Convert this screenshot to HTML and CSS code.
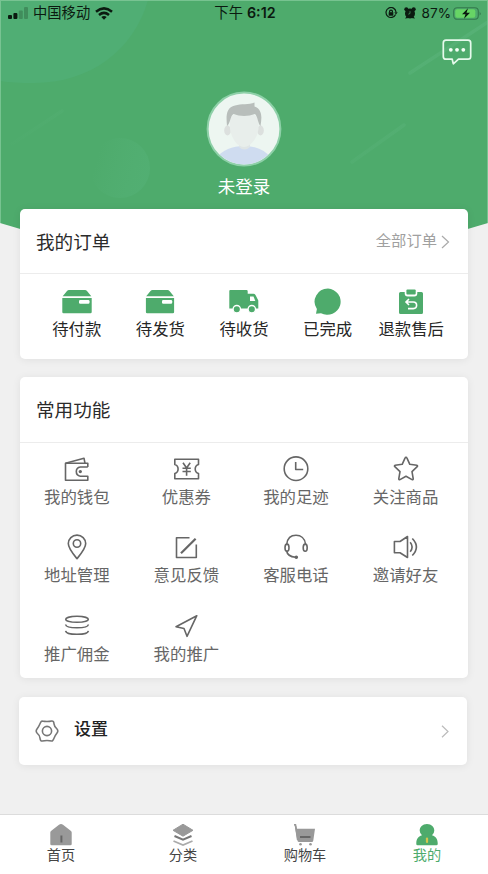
FILE: index.html
```html
<!DOCTYPE html>
<html lang="zh-CN">
<head>
<meta charset="utf-8">
<meta name="viewport" content="width=device-width, initial-scale=1">
<title>我的</title>
<link rel="stylesheet" href="styles.css">
</head>
<body>
<div class="app">
  <svg class="backdrop" width="488" height="262" viewBox="0 0 488 262" aria-hidden="true">
    <defs>
      <linearGradient id="disc" x1="0" y1="0" x2="1" y2="0.3"><stop offset="0.2" stop-color="#59b57d" stop-opacity="0"/><stop offset="1" stop-color="#55b278" stop-opacity=".5"/></linearGradient>
      <linearGradient id="ray" x1="0" y1="1" x2="1" y2="0"><stop offset="0" stop-color="#62b883" stop-opacity="0"/><stop offset="1" stop-color="#5cb57d" stop-opacity=".55"/></linearGradient>
    </defs>
    <path fill="#4eab6c" d="M0 0H488V223Q366 262 244 262T0 223Z"/>
    <path fill="#50ae74" d="M0 0H148C134 50 90 83 34 83Q14 83 0 81Z"/>
    <circle cx="120" cy="168" r="30" fill="url(#disc)"/>
    <path d="M12 144 62 111M352 162 404 125M410 73 488 22" stroke="url(#ray)" stroke-width="3.5" stroke-linecap="round"/>
    <path d="M0 .5H488M.5 0V223M487.500 0V223" stroke="#82c99a" stroke-width="1" opacity=".8"/>
  </svg>

  <header class="status">
    <div class="status-left">
      <svg width="20" height="12" viewBox="0 0 20 12"><g fill="#0b1a10"><rect y="8" width="4" height="4" rx="1"/><rect x="5.4" y="6" width="4" height="6" rx="1"/></g><g fill="#3a8052" opacity=".7"><rect x="10.800" y="3.500" width="4" height="8.500" rx="1"/><rect x="16" y="0" width="4" height="12" rx="1"/></g></svg>
      <span class="carrier">中国移动</span>
      <svg width="18" height="13" viewBox="0 0 18 13" fill="none" stroke="#0b1a10" stroke-width="2.500"><path d="M1 4.700Q9-2 17 4.700M4 8Q9 3.800 14 8"/><path d="m9 12.800-2.700-2.900q2.700-2 5.400 0z" fill="#0b1a10" stroke="none"/></svg>
    </div>
    <div class="clock">下午 <b>6:12</b></div>
    <div class="status-right">
      <svg width="13" height="12" viewBox="0 0 13 12" fill="none" stroke="#0b1a10" stroke-width="1.200"><path d="M10.600 7.500A5 5 0 1 1 11 5"/><path d="m9.300 5.300 3.400 0L11 7.600z" fill="#0b1a10" stroke="none"/><rect x="3.700" y="5.200" width="4.600" height="3.500" fill="#0b1a10" stroke="none"/><path d="M4.600 5.500V4.300q0-1.200 1.400-1.200t1.400 1.200v1.200"/></svg>
      <svg width="12" height="12" viewBox="0 0 12 12"><g fill="#0b1a10"><circle cx="6" cy="6.500" r="5"/><circle cx="2.300" cy="2.200" r="2"/><circle cx="9.700" cy="2.200" r="2"/><path d="m1 11.600 2-2.600 2 2zM11 11.600 9 9l-2 2z"/></g><path d="M6 4.200V6.500L4.300 7.200" fill="none" stroke="#4eab6c" stroke-width=".7"/></svg>
      <span class="percent">87%</span>
      <svg width="29" height="13" viewBox="0 0 29 13"><rect x=".7" y=".7" width="24.600" height="11.600" rx="3.500" fill="none" stroke="#34784c" stroke-width="1.100"/><rect x="2.300" y="2.300" width="20" height="8.400" rx="2" fill="#67d565"/><path d="M26.700 4.500q1.800 2 0 4z" fill="#2f7047"/><path d="m15 1.300-6 5.900h3.500L11 11.800l6-6h-3.500z" fill="#0b1a10"/></svg>
    </div>
  </header>

  <section class="profile">
    <svg class="message" width="30" height="27" viewBox="0 0 30 27" fill="none" stroke="#e6faec" stroke-width="1.700" stroke-linejoin="round"><path d="M4 1.200H26q2.700 0 2.700 2.700V17.500q0 2.700-2.700 2.700H16.500L11.300 24.800 10.200 20.200H4q-2.700 0-2.700-2.700V3.900Q1.300 1.200 4 1.200Z"/><g fill="#f2fff5" stroke="none"><circle cx="8.800" cy="10.800" r="1.900"/><circle cx="15" cy="10.800" r="1.900"/><circle cx="21.300" cy="10.800" r="1.900"/></g></svg>
    <svg class="avatar" width="76" height="76" viewBox="0 0 76 76">
      <defs><clipPath id="face"><circle cx="38" cy="38" r="35.500"/></clipPath></defs>
      <circle cx="38" cy="38" r="36.400" fill="#edf6f1" stroke="#8ed0a8" stroke-width="2"/>
      <g clip-path="url(#face)">
        <path d="M10 76V67Q20 55 38 55T65 67V76Z" fill="#cfdcf0"/>
        <path d="M33 50H44V56Q38.500 61 33 56Z" fill="#dfe5e5"/>
        <ellipse cx="21.500" cy="39.500" rx="3.300" ry="5" fill="#dce0de"/><ellipse cx="54.500" cy="39.500" rx="3.300" ry="5" fill="#dce0de"/>
        <path d="M24 26Q38 18 52.500 26V38C51 48 44 56 38 56S26 49 24 38Z" fill="#e8eeeb"/>
        <path d="M21 35C20 25 20 16.500 29 14.500 35 12.500 43 14 48.500 11.500V15.500C56.500 18.500 56 26 54.500 35 52 33 52 26 49 23 42 25.500 34 25.500 27.500 23 24 25 24.500 32 21 35Z" fill="#b8bebb"/>
      </g>
    </svg>
    <div class="nickname">未登录</div>
  </section>

  <main class="cards">
    <section class="card orders">
      <div class="card-head">
        <h2>我的订单</h2>
        <a class="more"><span>全部订单</span><svg width="9" height="14" viewBox="0 0 9 14" fill="none" stroke="#aaa" stroke-width="1.200"><path d="m1 1 6.500 6L1 13"/></svg></a>
      </div>
      <div class="order-grid">
        <a class="item"><svg width="30" height="28" viewBox="0 0 30 28" fill="#4eab6c"><path d="M.7 8.300 5 3q.8-1 2-1H23q1.200 0 2 1l4.300 5.300zM.3 10H29.700V24q0 1.200-1.200 1.200H1.500Q.3 25.200.3 24Z"/><rect x="17" y="12" width="10.500" height="3.800" rx="1.200" fill="#fff"/></svg><span>待付款</span></a>
        <a class="item"><svg width="30" height="28" viewBox="0 0 30 28" fill="#4eab6c"><path d="M1.200 8.300 5.500 3q.8-1 2-1H22.500q1.200 0 2 1l4.300 5.300zM.9 10H29.100V24q0 1.200-1.200 1.200H2.100Q.9 25.200.9 24Z"/><rect x="17" y="12" width="10.200" height="3.800" rx="1.200" fill="#fff"/></svg><span>待发货</span></a>
        <a class="item"><svg width="30" height="28" viewBox="0 0 30 28" fill="#4eab6c"><path d="M1.300 2H17.500q1.200 0 1.200 1.200V5.700H24.500q1.200 0 2 1.200L29.300 12.500V20.500H.3V3Q.3 2 1.300 2Z"/><path d="M21 8.500H24.500L26.300 13H21Z" fill="#fff"/><g stroke="#fff" stroke-width="1.300"><circle cx="7.800" cy="21.200" r="3.700"/><circle cx="22.800" cy="21.200" r="3.700"/></g></svg><span>待收货</span></a>
        <a class="item"><svg width="30" height="28" viewBox="0 0 30 28" fill="#4eab6c"><path d="M15 .6A13.300 13.100 0 1 1 8 25.200L3 25.800 3.900 21A13.300 13.100 0 0 1 15 .6Z"/></svg><span>已完成</span></a>
        <a class="item"><svg width="30" height="28" viewBox="0 0 30 28"><path d="M4.500 4H8.700V5.500q0 3 3 3h6.600q3 0 3-3V4h4.200q1.500 0 1.500 1.500V24.500Q27 26 25.500 26H4.500Q3 26 3 24.500V5.500Q3 4 4.500 4Z" fill="#4eab6c"/><rect x="10.400" y="1.500" width="9.300" height="5" rx="1" fill="#4eab6c"/><path d="M10 14H17.300q3.300 0 3.300 3.300t-3.300 3.300H12M13 11 10 14l3 3" fill="none" stroke="#fff" stroke-width="1.600"/></svg><span>退款售后</span></a>
      </div>
    </section>

    <section class="card tools">
      <div class="card-head"><h2>常用功能</h2></div>
      <div class="tool-grid">
        <a class="item"><svg class="line" viewBox="0 0 28 28"><path d="M24.800 12V8.300H2.500V25.200H24.800V21.200H17.300Q13.300 20.600 13.300 16.600T17.300 12H24.800"/><path d="M2.500 8.300 21 3.200 22 8.300"/><circle cx="17.300" cy="16.600" r=".9" fill="#666"/></svg><span>我的钱包</span></a>
        <a class="item"><svg class="line" viewBox="0 0 28 28"><path d="M2.800 4.300H26.500V9.500Q23.200 10.500 23.200 14T26.500 18.500V23.800H2.800V18.500Q6.100 17.500 6.100 14T2.800 9.500Z"/><path d="m11 7.700 3.600 5.300L18.200 7.700M10.500 13.200H18.800M10.500 16.500H18.800M14.600 13V20.800"/></svg><span>优惠券</span></a>
        <a class="item"><svg class="line" viewBox="0 0 28 28"><circle cx="14" cy="13.700" r="11.800"/><path d="M13.700 7V14.500H21.200"/></svg><span>我的足迹</span></a>
        <a class="item"><svg class="line" viewBox="0 0 28 28"><path d="M14 2.300q.7 0 1 .8l2.800 6.200 7 1q1.300.4.400 1.400l-5.200 5 1.200 7q0 1.400-1.200.9L14 21.200l-6 3.400q-1.200.5-1.200-.9l1.200-7-5.200-5q-.9-1 .4-1.400l7-1L13 3.100q.3-.8 1-.8Z"/></svg><span>关注商品</span></a>
        <a class="item"><svg class="line" viewBox="0 0 28 28"><path d="M14 25.700C10.500 21.500 5.300 15.500 5.300 10.600A8.700 8.500 0 0 1 22.700 10.600C22.700 15.500 17.500 21.500 14 25.700Z"/><circle cx="14" cy="10.500" r="3.700"/></svg><span>地址管理</span></a>
        <a class="item"><svg class="line" viewBox="0 0 28 28"><path d="M17.500 4.700H4.500V24.500H24.300V11.500"/><path d="M9 20.300 23.600 5.700" stroke-width="2.200"/></svg><span>意见反馈</span></a>
        <a class="item"><svg class="line" viewBox="0 0 28 28"><path d="M4.800 11.500V11C5.500 5.500 9 2.300 14 2.300S22.800 5.500 23.500 11v.5M4.500 17.500Q5.500 23.700 13.500 24.200"/><ellipse cx="5" cy="14.700" rx="2" ry="3.600"/><ellipse cx="23.200" cy="14.700" rx="2" ry="3.600"/><circle cx="14.300" cy="24.200" r="1" fill="#666"/></svg><span>客服电话</span></a>
        <a class="item"><svg class="line" viewBox="0 0 28 28"><path d="M2.400 8.500H8L15.500 3.500V24.500L8 19.800H2.400ZM18.200 9.200Q22 14 18.200 18.800M20.300 5.500Q28.500 14 20.300 22.500"/></svg><span>邀请好友</span></a>
        <a class="item"><svg class="line" viewBox="0 0 28 28"><ellipse cx="14" cy="7.300" rx="11.300" ry="3"/><path d="M2.600 12.500Q3 15.800 14 15.800T25.400 12.500M2.600 18.800Q3 22.300 14 22.300T25.400 18.800"/></svg><span>推广佣金</span></a>
        <a class="item"><svg class="line" viewBox="0 0 28 28"><path d="M24.800 3.700 4 14.700 12 16.500 15 24.300Z"/></svg><span>我的推广</span></a>
      </div>
    </section>

    <a class="card settings">
      <svg width="24" height="24" viewBox="0 0 24 24" fill="none" stroke="#777" stroke-width="1.600" stroke-linejoin="round"><path d="M7.300 2Q9 2.500 12 2.500T16.700 2Q18.700 1.800 19 4.800T22 10Q23.600 12 22 14T19 19.200 16.700 22Q15 21.500 12 21.500T7.300 22Q5.300 22.200 5 19.200T2 14Q.4 12 2 10T5 4.800 7.300 2Z"/><circle cx="12" cy="12" r="4.600"/></svg>
      <span>设置</span>
      <svg class="chevron" width="8" height="13" viewBox="0 0 8 13" fill="none" stroke="#bbb" stroke-width="1.200"><path d="m1 .7 6 5.800-6 5.800"/></svg>
    </a>
  </main>

  <nav class="tabs">
    <a class="tab"><svg width="24" height="22" viewBox="0 0 24 22"><path d="M12 0Q13 0 14 .8L22 7Q22.700 7.700 22.700 8.500V20q0 1.300-1.300 1.300H2.600Q1.300 21.300 1.300 20V8.500Q1.300 7.700 2 7L10 .8Q11 0 12 0Z" fill="#999"/><path d="M12.400 11.500V18.500" stroke="#666" stroke-width="2"/></svg><span>首页</span></a>
    <a class="tab"><svg width="24" height="22" viewBox="0 0 24 22"><path d="M12 .2 22 6.300 12 12.200 2 6.300Z" fill="#999" stroke="#999" stroke-linejoin="round"/><path d="m3.500 12 8.500 3.700 8.500-3.700" fill="none" stroke="#777" stroke-width="2"/><path d="m2.500 17 9.500 4 9.500-4" fill="none" stroke="#aaa" stroke-width="1.700"/></svg><span>分类</span></a>
    <a class="tab"><svg width="24" height="22" viewBox="0 0 24 22"><path d="M1.500.8Q3 .5 3.300 2L4 4.800H22L20.300 16.500q-.2 1.500-1.500 1.500H6.200q-1.500 0-1.800-1.500Z" fill="#999"/><path d="M1 .8H2.500L4.600 16" fill="none" stroke="#999" stroke-width="1.500"/><path d="M7 13H17.500" stroke="#666" stroke-width="2"/><circle cx="7.500" cy="20.300" r="1.300" fill="#999"/><circle cx="17.500" cy="20.300" r="1.300" fill="#999"/></svg><span>购物车</span></a>
    <a class="tab active"><svg width="24" height="22" viewBox="0 0 24 22"><path d="M12 0C16.500 0 19.300 3 19.300 6.700Q19.300 9 17 11.300C21 12.500 22.700 15.500 22.700 19V20q0 1.300-1.300 1.300H2.600Q1.300 21.300 1.300 20V19C1.300 15.500 3 12.500 7 11.300Q4.700 9 4.700 6.700C4.700 3 7.500 0 12 0Z" fill="#4eab6c"/><path d="M12 14.500V18" stroke="#d3c64e" stroke-width="2.200" stroke-linecap="round"/></svg><span>我的</span></a>
  </nav>
</div>
</body>
</html>
```

FILE: styles.css
```css
* { box-sizing: border-box; }

body {
  margin: 0;
  background: #f0f0f0;
  color: #333;
  font-family: Inter, "Noto Sans CJK SC", sans-serif;
}

h2 { margin: 0; font-weight: 400; }
svg { display: block; flex: none; }

.app {
  position: relative;
  display: flex;
  flex-direction: column;
  width: 488px;
  height: 874px;
  overflow: hidden;
}

.backdrop { position: absolute; top: 0; left: 0; }

.status {
  position: relative;
  display: grid;
  grid-template-columns: 1fr auto 1fr;
  align-items: center;
  height: 26px;
  padding: 0 6px 0 8px;
  color: #0b1a10;
  font-size: 14.3px;
  line-height: 26px;
}

.status-left, .status-right { display: flex; align-items: center; }
.status-left { gap: 5px; }
.status-right { justify-content: flex-end; gap: 6px; }
.percent { margin-right: -4px; font-size: 13.6px; }
.clock b { font-weight: 600; }

.profile {
  position: relative;
  display: flex;
  flex-direction: column;
  align-items: center;
  height: 183px;
  padding-top: 65px;
}

.message { position: absolute; top: 13px; right: 16px; }

.nickname {
  margin-top: 7px;
  color: #fff;
  font-size: 17.5px;
  line-height: 26px;
}

.cards {
  position: relative;
  display: flex;
  flex: 1;
  flex-direction: column;
  gap: 18px;
  padding: 0 20px;
}

.card {
  border-radius: 5px;
  background: #fff;
  box-shadow: 0 1px 8px rgba(0, 0, 0, .07);
}

.orders { height: 150px; }
.tools { height: 301px; }

.card-head {
  display: flex;
  align-items: center;
  justify-content: space-between;
  height: 65px;
  padding: 1px 18px 0 16px;
  border-bottom: 1px solid #ececec;
}

.tools .card-head { height: 66px; }

.card-head h2 { font-size: 18.6px; line-height: 28px; color: #2b2b2b; }

.more {
  display: flex;
  align-items: center;
  gap: 4px;
  color: #a0a0a0;
  font-size: 15.3px;
  line-height: 24px;
}

.more span { margin-top: -2px; }

.item {
  display: flex;
  flex-direction: column;
  align-items: center;
  font-size: 16.4px;
  line-height: 24px;
  white-space: nowrap;
}

.order-grid {
  display: grid;
  grid-template-columns: repeat(5, 1fr);
  padding: 14px 15px 0;
}

.order-grid .item { color: #262626; }
.order-grid .item span { margin-top: 1px; }

.tool-grid {
  display: grid;
  grid-template-columns: repeat(4, 109.6px);
  grid-auto-rows: 78.3px;
  padding: 12px 0 0 2px;
}

.tool-grid .item { color: #666; }
.tool-grid .item span { margin-top: 2px; }

.line {
  width: 28px;
  height: 28px;
  fill: none;
  stroke: #666;
  stroke-width: 1.6;
  stroke-linejoin: round;
}

.settings {
  display: flex;
  align-items: center;
  height: 68px;
  margin: 1px 1px 0 -1px;
  padding: 0 18px 0 16px;
  color: #222;
  font-size: 17px;
  font-weight: 500;
  line-height: 24px;
}

.settings span { margin: -4px 0 0 15px; }
.chevron { margin-left: auto; }

.tabs {
  position: relative;
  display: grid;
  grid-template-columns: repeat(4, 1fr);
  height: 60px;
  border-top: 1px solid #dcdcdc;
  background: #fff;
}

.tab {
  display: flex;
  flex-direction: column;
  align-items: center;
  padding-top: 9px;
  color: #444;
  font-size: 14.2px;
  line-height: 18px;
}

.active { color: #4eab6c; }
```
